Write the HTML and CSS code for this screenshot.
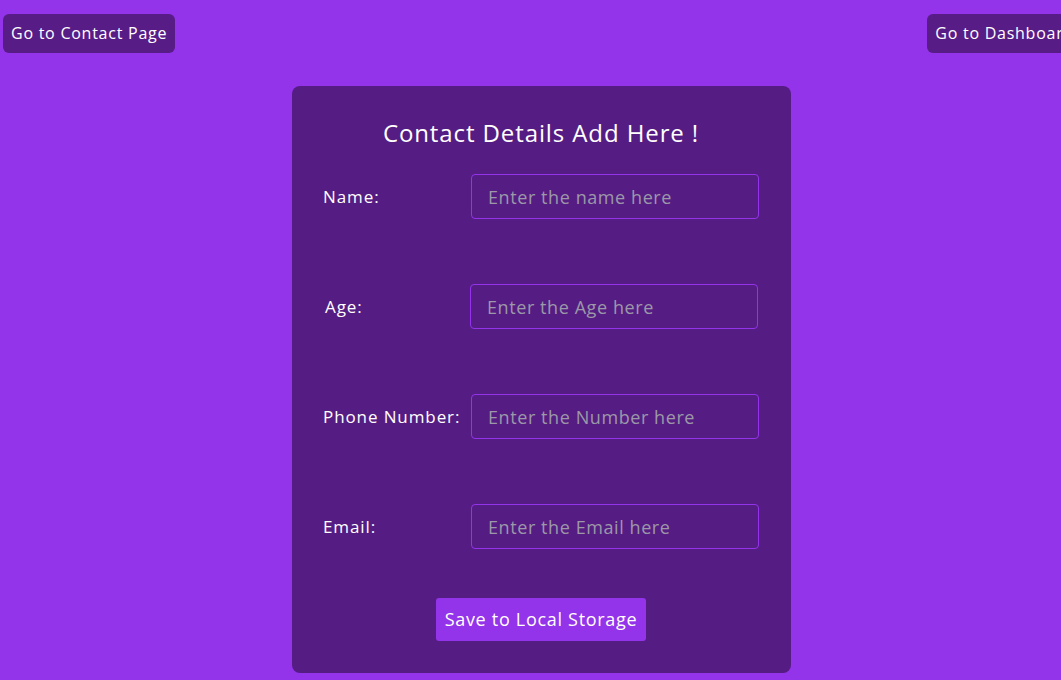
FILE: index.html
```html
<!DOCTYPE html>
<html lang="en">
<head>
<meta charset="utf-8">
<title>Contact Details</title>
<link rel="stylesheet" href="styles.css">
</head>
<body>
<div class="page">
  <nav class="topbar">
    <button class="nav-btn">Go to Contact Page</button>
    <button class="nav-btn">Go to Dashboard</button>
  </nav>
  <main class="card">
    <h1 class="card-title">Contact Details Add Here !</h1>
    <form class="form">
      <div class="row">
        <label class="label" for="name">Name:</label>
        <input class="field" id="name" type="text" placeholder="Enter the name here">
      </div>
      <div class="row row-age">
        <label class="label" for="age">Age:</label>
        <input class="field" id="age" type="text" placeholder="Enter the Age here">
      </div>
      <div class="row">
        <label class="label" for="phone">Phone Number:</label>
        <input class="field" id="phone" type="text" placeholder="Enter the Number here">
      </div>
      <div class="row">
        <label class="label" for="email">Email:</label>
        <input class="field" id="email" type="text" placeholder="Enter the Email here">
      </div>
      <div class="actions">
        <button type="button" class="save-btn">Save to Local Storage</button>
      </div>
    </form>
  </main>
</div>
</body>
</html>
```

FILE: styles.css
```css
html, body {
  margin: 0;
  padding: 0;
  overflow: hidden;
}
body {
  background: #9333ea;
  font-family: "Open Sans", "DejaVu Sans", sans-serif;
  color: #ffffff;
  height: 680px;
}
.page {
  width: 1083px;
}
.topbar {
  display: flex;
  justify-content: space-between;
  padding: 14px 1px 0 3px;
}
.nav-btn {
  font-family: inherit;
  font-size: 16px;
  line-height: 24px;
  letter-spacing: 0.75px;
  padding: 7px 8px 8px;
  background: #581c87;
  color: #ffffff;
  border: none;
  border-radius: 6px;
  white-space: nowrap;
}
.card {
  width: 499px;
  height: 587px;
  box-sizing: border-box;
  margin: 33px auto 0;
  background: #551d83;
  border-radius: 8px;
  padding: 29px 32px 0 31px;
}
.card-title {
  margin: 0;
  font-size: 24px;
  line-height: 36px;
  font-weight: 400;
  letter-spacing: 0.9px;
  text-align: center;
}
.form {
  margin-top: 23px;
  display: flex;
  flex-direction: column;
  gap: 65px;
}
.row {
  display: grid;
  grid-template-columns: 148px 288px;
  align-items: center;
}
.row-age .label {
  padding-left: 2px;
}
.row-age .field {
  margin-left: -1px;
}
.label {
  font-size: 17px;
  letter-spacing: 0.9px;
}
.field {
  height: 45px;
  box-sizing: border-box;
  width: 288px;
  background: transparent;
  border: 1px solid #9333ea;
  border-radius: 4px;
  padding: 0 16px;
  font-family: inherit;
  font-size: 18px;
  letter-spacing: 0.58px;
  color: #ffffff;
  outline: none;
}
.field::placeholder {
  color: #9c98a8;
}
.actions {
  display: flex;
  justify-content: center;
  margin-top: -16px;
}
.save-btn {
  font-family: inherit;
  font-size: 18px;
  line-height: 27px;
  letter-spacing: 0.7px;
  padding: 8px 9px;
  background: #9333ea;
  color: #ffffff;
  border: none;
  border-radius: 3px;
}
```
